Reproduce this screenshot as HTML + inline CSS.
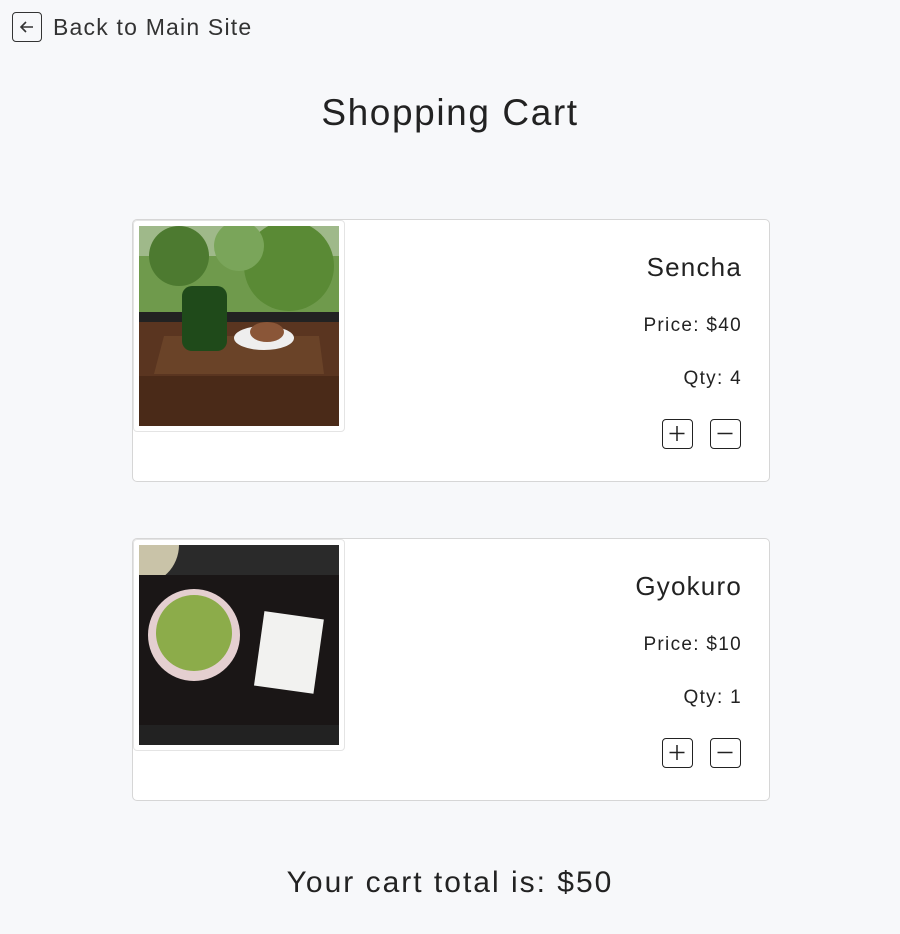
<!DOCTYPE html>
<html><head><style>
body{margin:0;width:900px;height:934px;background:#f7f8fa;font-family:"Liberation Sans",sans-serif;color:#222;position:relative;overflow:hidden}
.abs{position:absolute}
.back{left:12px;top:12px;font-size:23px;display:flex;align-items:center;color:#333;letter-spacing:1.2px}
.back .ic{width:30px;height:30px;border:1.5px solid #333;border-radius:4px;box-sizing:border-box;margin-right:11px;display:flex;align-items:center;justify-content:center}
h1{position:absolute;left:0;width:900px;top:92px;margin:0;text-align:center;font-weight:normal;font-size:37px;color:#222;letter-spacing:1.6px}
.card{position:absolute;left:132px;width:636px;height:261px;background:#fff;border:1px solid #d6d6d6;border-radius:5px}
.thumb{position:absolute;left:0px;top:0px;width:210px;height:210px;border:1px solid #e4e4e4;border-radius:4px;background:#fff}
.photo{position:absolute;left:5px;top:5px;width:200px;height:200px;overflow:hidden}
.name{position:absolute;right:27px;top:32px;font-size:26px;letter-spacing:1.2px}
.price{position:absolute;right:27px;top:95px;font-size:19px;letter-spacing:1.3px}
.qty{position:absolute;right:27px;top:148px;font-size:19px;letter-spacing:1.3px}
.btn{position:absolute;top:199px;width:31px;height:30px;border:1.5px solid #222;border-radius:4px;box-sizing:border-box}
.total{position:absolute;left:0;width:900px;text-align:center;top:866px;font-size:30px;color:#222;letter-spacing:2px}
</style></head><body>
<div class="abs back"><span class="ic"><svg width="18" height="18" viewBox="0 0 18 18"><path d="M15 9H3M8 4L3 9l5 5" fill="none" stroke="#333" stroke-width="1.6"/></svg></span>Back to Main Site</div>
<h1>Shopping Cart</h1>

<div class="card" style="top:219px">
 <div class="thumb"><div class="photo">
  <svg width="200" height="200" viewBox="0 0 200 200">
   <rect width="200" height="90" fill="#6f9a4c"/>
   <rect y="0" width="200" height="30" fill="#9fb98a"/>
   <circle cx="40" cy="30" r="30" fill="#4d7a30"/><circle cx="150" cy="40" r="45" fill="#5a8a35"/><circle cx="100" cy="20" r="25" fill="#7aa55a"/>
   <rect y="86" width="200" height="10" fill="#222"/>
   <rect y="96" width="200" height="104" fill="#5a3520"/>
   <rect y="150" width="200" height="50" fill="#4a2a18"/>
   <polygon points="25,110 180,110 185,148 15,148" fill="#6a4328"/>
   <rect x="43" y="60" width="45" height="65" rx="10" fill="#1f4a1a"/>
   <ellipse cx="125" cy="112" rx="30" ry="12" fill="#eee"/>
   <ellipse cx="128" cy="106" rx="17" ry="10" fill="#8a5638"/>
  </svg></div></div>
 <div class="name">Sencha</div>
 <div class="price">Price: $40</div>
 <div class="qty">Qty: 4</div>
 <div class="btn" style="left:529px"><svg width="28" height="27"><path d="M14 6v15M6.5 13.5h15" stroke="#222" stroke-width="1.5"/></svg></div>
 <div class="btn" style="left:577px"><svg width="28" height="27"><path d="M6.5 13.5h15" stroke="#222" stroke-width="1.5"/></svg></div>
</div>

<div class="card" style="top:538px">
 <div class="thumb"><div class="photo">
  <svg width="200" height="200" viewBox="0 0 200 200">
   <rect width="200" height="200" fill="#2a2a2a"/>
   <circle cx="0" cy="0" r="40" fill="#c9c3a8"/>
   <rect x="0" y="30" width="200" height="150" fill="#1a1616"/>
   <circle cx="55" cy="90" r="46" fill="#e4cfd0"/>
   <circle cx="55" cy="88" r="38" fill="#8cac4a"/>
   <rect x="120" y="70" width="60" height="75" fill="#f2f2f0" transform="rotate(8 150 107)"/>
   <rect y="180" width="200" height="20" fill="#222"/>
  </svg></div></div>
 <div class="name">Gyokuro</div>
 <div class="price">Price: $10</div>
 <div class="qty">Qty: 1</div>
 <div class="btn" style="left:529px"><svg width="28" height="27"><path d="M14 6v15M6.5 13.5h15" stroke="#222" stroke-width="1.5"/></svg></div>
 <div class="btn" style="left:577px"><svg width="28" height="27"><path d="M6.5 13.5h15" stroke="#222" stroke-width="1.5"/></svg></div>
</div>

<div class="total">Your cart total is: $50</div>
</body></html>
